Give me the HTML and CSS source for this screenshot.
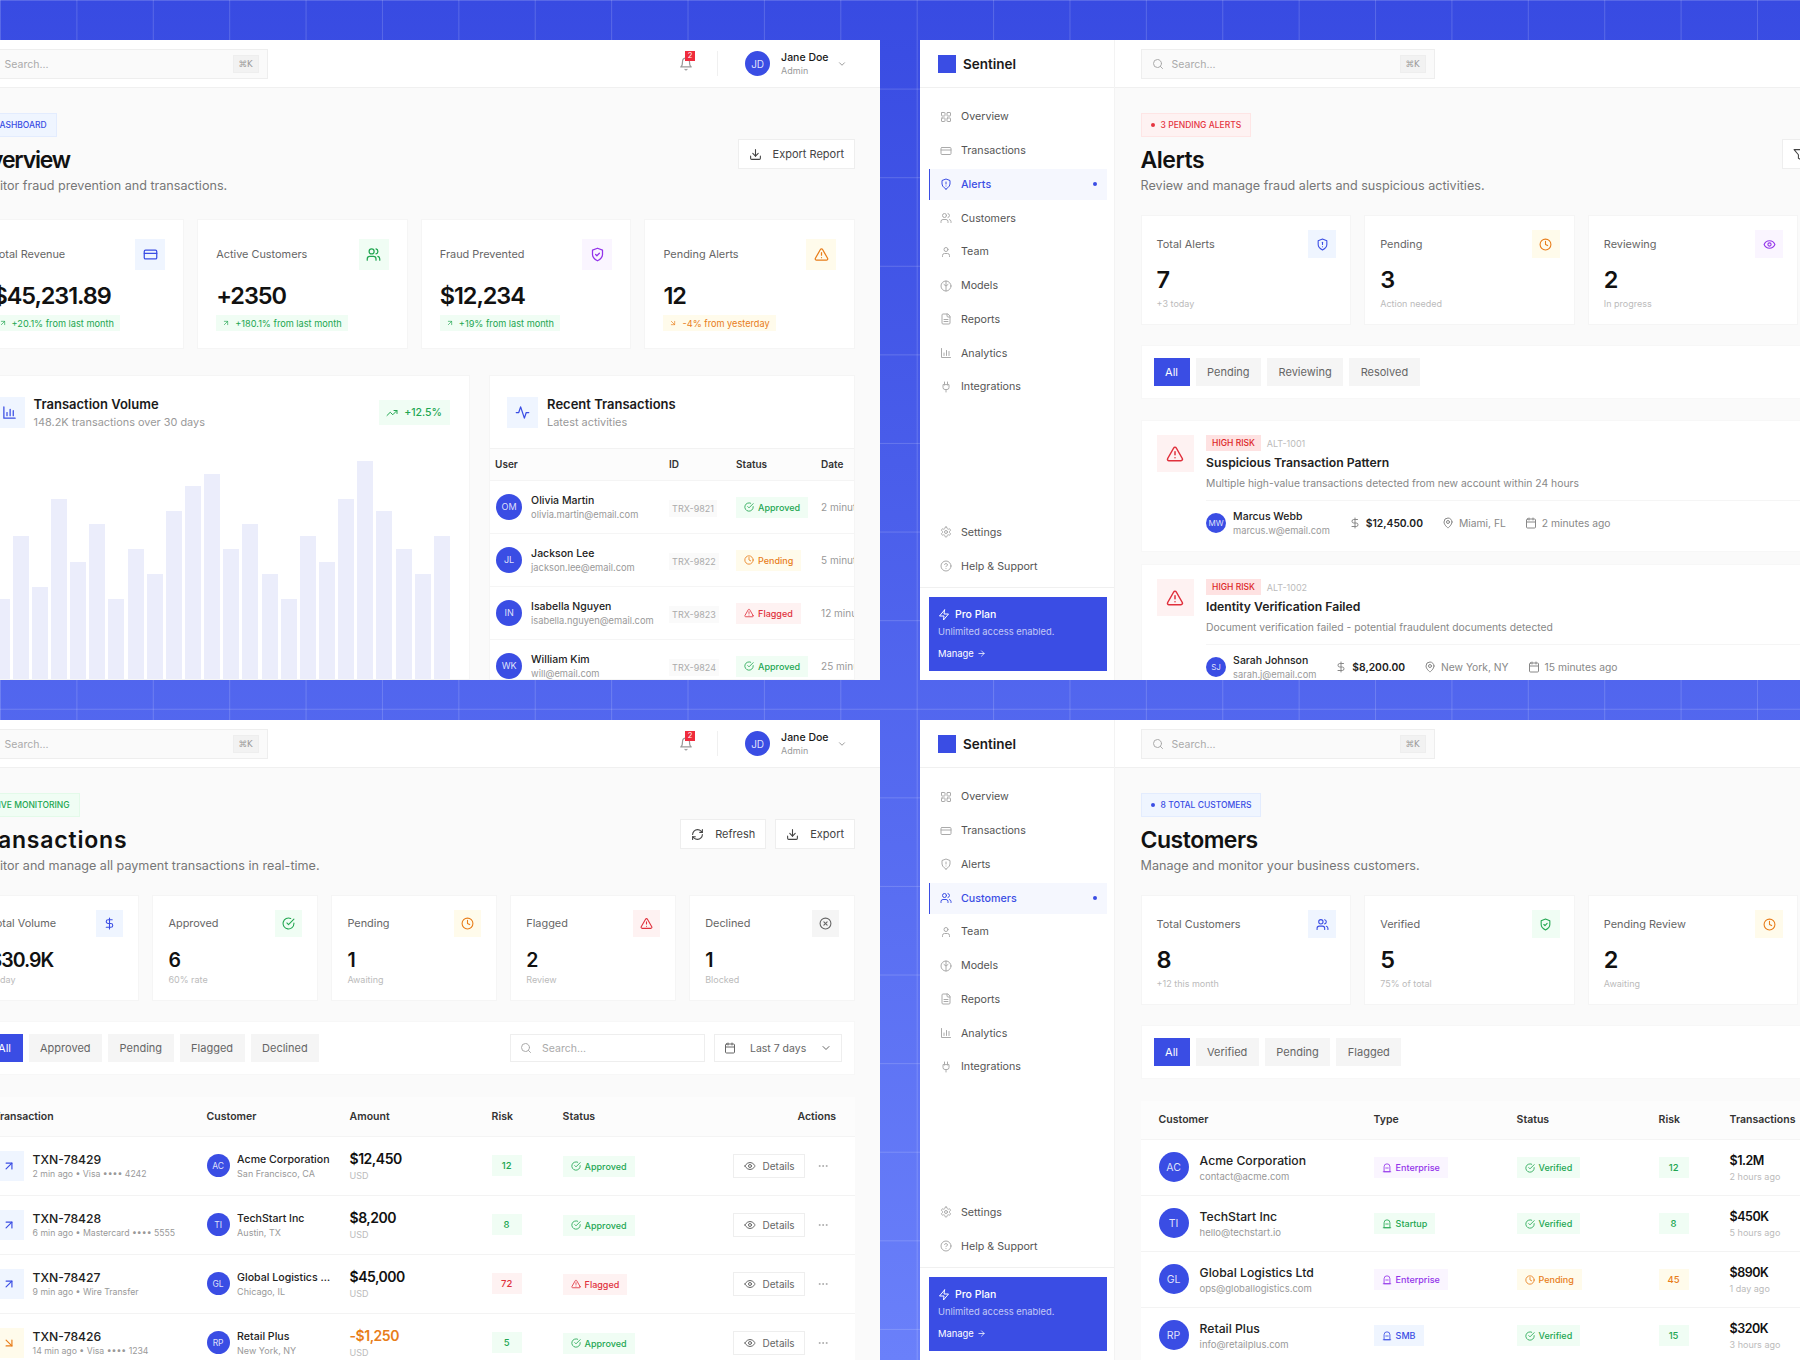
FILE: index.html
```html
<!DOCTYPE html>
<html lang="en">
<head>
    <meta charset="UTF-8">
    <title>Sentinel</title>
    <link rel="stylesheet" href="styles.css">
</head>
<body>
    <svg class="sprite">
        <symbol id="i-card" viewBox="0 0 24 24"><rect x="2" y="5" width="20" height="14" rx="2"/><path d="M2 10h20"/></symbol>
        <symbol id="i-users" viewBox="0 0 24 24"><path d="M16 21v-2a4 4 0 0 0-4-4H6a4 4 0 0 0-4 4v2"/><circle cx="9" cy="7" r="4"/><path d="M22 21v-2a4 4 0 0 0-3-3.87"/><path d="M16 3.13a4 4 0 0 1 0 7.75"/></symbol>
        <symbol id="i-user" viewBox="0 0 24 24"><path d="M19 21v-2a4 4 0 0 0-4-4H9a4 4 0 0 0-4 4v2"/><circle cx="12" cy="7" r="4"/></symbol>
        <symbol id="i-shield-check" viewBox="0 0 24 24"><path d="M12 22s8-4 8-10V5l-8-3-8 3v7c0 6 8 10 8 10z"/><path d="m9 12 2 2 4-4"/></symbol>
        <symbol id="i-shield-alert" viewBox="0 0 24 24"><path d="M12 22s8-4 8-10V5l-8-3-8 3v7c0 6 8 10 8 10z"/><path d="M12 8v4"/><path d="M12 16h.01"/></symbol>
        <symbol id="i-alert" viewBox="0 0 24 24"><path d="m21.73 18-8-14a2 2 0 0 0-3.48 0l-8 14A2 2 0 0 0 4 21h16a2 2 0 0 0 1.73-3Z"/><path d="M12 9v4"/><path d="M12 17h.01"/></symbol>
        <symbol id="i-bell" viewBox="0 0 24 24"><path d="M6 8a6 6 0 0 1 12 0c0 7 3 9 3 9H3s3-2 3-9"/><path d="M10.3 21a1.94 1.94 0 0 0 3.4 0"/></symbol>
        <symbol id="i-search" viewBox="0 0 24 24"><circle cx="11" cy="11" r="8"/><path d="m21 21-4.3-4.3"/></symbol>
        <symbol id="i-chevron" viewBox="0 0 24 24"><path d="m6 9 6 6 6-6"/></symbol>
        <symbol id="i-download" viewBox="0 0 24 24"><path d="M21 15v4a2 2 0 0 1-2 2H5a2 2 0 0 1-2-2v-4"/><path d="m7 10 5 5 5-5"/><path d="M12 15V3"/></symbol>
        <symbol id="i-up-right" viewBox="0 0 24 24"><path d="M7 7h10v10"/><path d="M7 17 17 7"/></symbol>
        <symbol id="i-down-right" viewBox="0 0 24 24"><path d="m7 7 10 10"/><path d="M17 7v10H7"/></symbol>
        <symbol id="i-chart" viewBox="0 0 24 24"><path d="M3 3v18h18"/><path d="M8 17v-5"/><path d="M13 17V7"/><path d="M18 17V9"/></symbol>
        <symbol id="i-activity" viewBox="0 0 24 24"><path d="M22 12h-4l-3 9L9 3l-3 9H2"/></symbol>
        <symbol id="i-trending" viewBox="0 0 24 24"><path d="m22 7-8.5 8.5-5-5L2 17"/><path d="M16 7h6v6"/></symbol>
        <symbol id="i-check" viewBox="0 0 24 24"><path d="M22 11.08V12a10 10 0 1 1-5.93-9.14"/><path d="m9 11 3 3L22 4"/></symbol>
        <symbol id="i-clock" viewBox="0 0 24 24"><circle cx="12" cy="12" r="10"/><path d="M12 6v6l4 2"/></symbol>
        <symbol id="i-dollar" viewBox="0 0 24 24"><path d="M12 2v20"/><path d="M17 5H9.5a3.5 3.5 0 0 0 0 7h5a3.5 3.5 0 0 1 0 7H6"/></symbol>
        <symbol id="i-x-circle" viewBox="0 0 24 24"><circle cx="12" cy="12" r="10"/><path d="m15 9-6 6"/><path d="m9 9 6 6"/></symbol>
        <symbol id="i-refresh" viewBox="0 0 24 24"><path d="M3 12a9 9 0 0 1 9-9 9.75 9.75 0 0 1 6.74 2.74L21 8"/><path d="M21 3v5h-5"/><path d="M21 12a9 9 0 0 1-9 9 9.75 9.75 0 0 1-6.74-2.74L3 16"/><path d="M8 16H3v5"/></symbol>
        <symbol id="i-eye" viewBox="0 0 24 24"><path d="M2 12s3-7 10-7 10 7 10 7-3 7-10 7-10-7-10-7Z"/><circle cx="12" cy="12" r="3"/></symbol>
        <symbol id="i-calendar" viewBox="0 0 24 24"><rect x="3" y="4" width="18" height="18" rx="2"/><path d="M16 2v4"/><path d="M8 2v4"/><path d="M3 10h18"/></symbol>
        <symbol id="i-grid" viewBox="0 0 24 24"><rect x="3" y="3" width="7" height="7" rx="1"/><rect x="14" y="3" width="7" height="7" rx="1"/><rect x="14" y="14" width="7" height="7" rx="1"/><rect x="3" y="14" width="7" height="7" rx="1"/></symbol>
        <symbol id="i-model" viewBox="0 0 24 24"><circle cx="12" cy="12" r="10"/><path d="M12 2v20"/><path d="M8 9l4 3 4-3"/></symbol>
        <symbol id="i-file" viewBox="0 0 24 24"><path d="M15 2H6a2 2 0 0 0-2 2v16a2 2 0 0 0 2 2h12a2 2 0 0 0 2-2V7Z"/><path d="M14 2v4a2 2 0 0 0 2 2h4"/><path d="M16 13H8"/><path d="M16 17H8"/></symbol>
        <symbol id="i-plug" viewBox="0 0 24 24"><path d="M12 22v-5"/><path d="M9 8V2"/><path d="M15 8V2"/><path d="M18 8v5a4 4 0 0 1-4 4h-4a4 4 0 0 1-4-4V8Z"/></symbol>
        <symbol id="i-gear" viewBox="0 0 24 24"><path d="M12.22 2h-.44a2 2 0 0 0-2 2v.18a2 2 0 0 1-1 1.73l-.43.25a2 2 0 0 1-2 0l-.15-.08a2 2 0 0 0-2.73.73l-.22.38a2 2 0 0 0 .73 2.73l.15.1a2 2 0 0 1 1 1.72v.51a2 2 0 0 1-1 1.74l-.15.09a2 2 0 0 0-.73 2.73l.22.38a2 2 0 0 0 2.73.73l.15-.08a2 2 0 0 1 2 0l.43.25a2 2 0 0 1 1 1.73V20a2 2 0 0 0 2 2h.44a2 2 0 0 0 2-2v-.18a2 2 0 0 1 1-1.73l.43-.25a2 2 0 0 1 2 0l.15.08a2 2 0 0 0 2.73-.73l.22-.39a2 2 0 0 0-.73-2.73l-.15-.08a2 2 0 0 1-1-1.74v-.5a2 2 0 0 1 1-1.74l.15-.09a2 2 0 0 0 .73-2.73l-.22-.38a2 2 0 0 0-2.73-.73l-.15.08a2 2 0 0 1-2 0l-.43-.25a2 2 0 0 1-1-1.73V4a2 2 0 0 0-2-2z"/><circle cx="12" cy="12" r="3"/></symbol>
        <symbol id="i-help" viewBox="0 0 24 24"><circle cx="12" cy="12" r="10"/><path d="M9.09 9a3 3 0 0 1 5.83 1c0 2-3 3-3 3"/><path d="M12 17h.01"/></symbol>
        <symbol id="i-zap" viewBox="0 0 24 24"><path d="M13 2 3 14h9l-1 8 10-12h-9l1-8z"/></symbol>
        <symbol id="i-arrow" viewBox="0 0 24 24"><path d="M5 12h14"/><path d="m12 5 7 7-7 7"/></symbol>
        <symbol id="i-pin" viewBox="0 0 24 24"><path d="M20 10c0 6-8 12-8 12s-8-6-8-12a8 8 0 0 1 16 0Z"/><circle cx="12" cy="10" r="3"/></symbol>
        <symbol id="i-filter" viewBox="0 0 24 24"><path d="M22 3H2l8 9.46V19l4 2v-8.54L22 3z"/></symbol>
        <symbol id="i-more" viewBox="0 0 24 24"><circle cx="5" cy="12" r="1"/><circle cx="12" cy="12" r="1"/><circle cx="19" cy="12" r="1"/></symbol>
        <symbol id="i-building" viewBox="0 0 24 24"><path d="M5 20V9a7 7 0 0 1 14 0v11Z"/><path d="M3 21h18"/><path d="M9 12h6"/></symbol>
    </svg>

    <!-- overview -->
    <section class="window">
        <div class="main main-left">
            <header class="topbar">
                <div class="search-box">
                    <svg class="ic"><use href="#i-search"/></svg>
                    <span class="search-text">Search...</span>
                    <kbd>⌘K</kbd>
                </div>
                <div class="user-area">
                    <div class="bell"><svg class="ic"><use href="#i-bell"/></svg><span class="bell-count">2</span></div>
                    <div class="user-menu">
                        <span class="avatar avatar-head">JD</span>
                        <div class="user-text"><strong>Jane Doe</strong><small>Admin</small></div>
                        <svg class="ic chevron"><use href="#i-chevron"/></svg>
                    </div>
                </div>
            </header>
            <div class="content">
                <div class="page-head">
                    <div>
                        <span class="tag tag-blue"><i class="dot"></i>DASHBOARD</span>
                        <h1 class="title-tight">Overview</h1>
                        <p>Monitor fraud prevention and transactions.</p>
                    </div>
                    <div class="page-actions">
                        <button class="btn"><svg class="ic"><use href="#i-download"/></svg>Export Report</button>
                    </div>
                </div>

                <div class="stats stats-4 stats-big">
                    <div class="stat">
                        <div class="stat-top"><span>Total Revenue</span><span class="stat-icon blue"><svg class="ic"><use href="#i-card"/></svg></span></div>
                        <div class="stat-value">$45,231.89</div>
                        <span class="delta green"><svg class="ic"><use href="#i-up-right"/></svg>+20.1% from last month</span>
                    </div>
                    <div class="stat">
                        <div class="stat-top"><span>Active Customers</span><span class="stat-icon green"><svg class="ic"><use href="#i-users"/></svg></span></div>
                        <div class="stat-value">+2350</div>
                        <span class="delta green"><svg class="ic"><use href="#i-up-right"/></svg>+180.1% from last month</span>
                    </div>
                    <div class="stat">
                        <div class="stat-top"><span>Fraud Prevented</span><span class="stat-icon purple"><svg class="ic"><use href="#i-shield-check"/></svg></span></div>
                        <div class="stat-value">$12,234</div>
                        <span class="delta green"><svg class="ic"><use href="#i-up-right"/></svg>+19% from last month</span>
                    </div>
                    <div class="stat">
                        <div class="stat-top"><span>Pending Alerts</span><span class="stat-icon amber"><svg class="ic"><use href="#i-alert"/></svg></span></div>
                        <div class="stat-value">12</div>
                        <span class="delta amber"><svg class="ic"><use href="#i-down-right"/></svg>-4% from yesterday</span>
                    </div>
                </div>

                <div class="overview-grid">
                    <div class="panel">
                        <div class="panel-head">
                            <span class="panel-icon blue"><svg class="ic"><use href="#i-chart"/></svg></span>
                            <div class="panel-title"><h3>Transaction Volume</h3><small>148.2K transactions over 30 days</small></div>
                            <span class="trend"><svg class="ic"><use href="#i-trending"/></svg>+12.5%</span>
                        </div>
                        <div class="bars">
                            <i style="height:81px"></i><i style="height:144px"></i><i style="height:93px"></i><i style="height:181px"></i>
                            <i style="height:118px"></i><i style="height:156px"></i><i style="height:81px"></i><i style="height:131px"></i>
                            <i style="height:106px"></i><i style="height:169px"></i><i style="height:194px"></i><i style="height:206px"></i>
                            <i style="height:131px"></i><i style="height:156px"></i><i style="height:106px"></i><i style="height:81px"></i>
                            <i style="height:144px"></i><i style="height:118px"></i><i style="height:181px"></i><i style="height:219px"></i>
                            <i style="height:169px"></i><i style="height:131px"></i><i style="height:106px"></i><i style="height:144px"></i>
                        </div>
                    </div>
                    <div class="panel">
                        <div class="panel-head panel-head-line">
                            <span class="panel-icon blue"><svg class="ic"><use href="#i-activity"/></svg></span>
                            <div class="panel-title"><h3>Recent Transactions</h3><small>Latest activities</small></div>
                        </div>
                        <table class="mini-table">
                            <thead><tr><th>User</th><th>ID</th><th>Status</th><th>Date</th></tr></thead>
                            <tbody>
                                <tr>
                                    <td><div class="person"><span class="avatar">OM</span><div><b>Olivia Martin</b><small>olivia.martin@email.com</small></div></div></td>
                                    <td><span class="trx-id">TRX-9821</span></td>
                                    <td><span class="pill green"><svg class="ic"><use href="#i-check"/></svg>Approved</span></td>
                                    <td class="muted">2 minutes ago</td>
                                </tr>
                                <tr>
                                    <td><div class="person"><span class="avatar">JL</span><div><b>Jackson Lee</b><small>jackson.lee@email.com</small></div></div></td>
                                    <td><span class="trx-id">TRX-9822</span></td>
                                    <td><span class="pill amber"><svg class="ic"><use href="#i-clock"/></svg>Pending</span></td>
                                    <td class="muted">5 minutes ago</td>
                                </tr>
                                <tr>
                                    <td><div class="person"><span class="avatar">IN</span><div><b>Isabella Nguyen</b><small>isabella.nguyen@email.com</small></div></div></td>
                                    <td><span class="trx-id">TRX-9823</span></td>
                                    <td><span class="pill red"><svg class="ic"><use href="#i-alert"/></svg>Flagged</span></td>
                                    <td class="muted">12 minutes ago</td>
                                </tr>
                                <tr>
                                    <td><div class="person"><span class="avatar">WK</span><div><b>William Kim</b><small>will@email.com</small></div></div></td>
                                    <td><span class="trx-id">TRX-9824</span></td>
                                    <td><span class="pill green"><svg class="ic"><use href="#i-check"/></svg>Approved</span></td>
                                    <td class="muted">25 minutes ago</td>
                                </tr>
                            </tbody>
                        </table>
                    </div>
                </div>
            </div>
        </div>
    </section>

    <!-- alerts -->
    <section class="window">
        <aside class="sidebar">
            <div class="brand"><span class="brand-mark"></span>Sentinel</div>
            <nav class="nav">
                <a><svg class="ic"><use href="#i-grid"/></svg>Overview</a>
                <a><svg class="ic"><use href="#i-card"/></svg>Transactions</a>
                <a class="active"><svg class="ic"><use href="#i-shield-alert"/></svg>Alerts</a>
                <a><svg class="ic"><use href="#i-users"/></svg>Customers</a>
                <a><svg class="ic"><use href="#i-user"/></svg>Team</a>
                <a><svg class="ic"><use href="#i-model"/></svg>Models</a>
                <a><svg class="ic"><use href="#i-file"/></svg>Reports</a>
                <a><svg class="ic"><use href="#i-chart"/></svg>Analytics</a>
                <a><svg class="ic"><use href="#i-plug"/></svg>Integrations</a>
            </nav>
            <nav class="nav nav-bottom">
                <a><svg class="ic"><use href="#i-gear"/></svg>Settings</a>
                <a><svg class="ic"><use href="#i-help"/></svg>Help &amp; Support</a>
            </nav>
            <div class="plan-wrap">
                <div class="plan">
                    <div class="plan-name"><svg class="ic"><use href="#i-zap"/></svg>Pro Plan</div>
                    <p>Unlimited access enabled.</p>
                    <a>Manage <svg class="ic"><use href="#i-arrow"/></svg></a>
                </div>
            </div>
        </aside>
        <div class="main">
            <header class="topbar">
                <div class="search-box">
                    <svg class="ic"><use href="#i-search"/></svg>
                    <span class="search-text">Search...</span>
                    <kbd>⌘K</kbd>
                </div>
            </header>
            <div class="content">
                <div class="page-head">
                    <div>
                        <span class="tag tag-red"><i class="dot"></i>3 PENDING ALERTS</span>
                        <h1>Alerts</h1>
                        <p>Review and manage fraud alerts and suspicious activities.</p>
                    </div>
                    <div class="page-actions">
                        <button class="btn btn-filter"><svg class="ic"><use href="#i-filter"/></svg>Filter Alerts</button>
                        <button class="btn"><svg class="ic"><use href="#i-download"/></svg>Export Report</button>
                    </div>
                </div>

                <div class="stats stats-4 stats-mid">
                    <div class="stat">
                        <div class="stat-top"><span>Total Alerts</span><span class="stat-icon blue"><svg class="ic"><use href="#i-shield-alert"/></svg></span></div>
                        <div class="stat-value">7</div>
                        <small class="stat-note">+3 today</small>
                    </div>
                    <div class="stat">
                        <div class="stat-top"><span>Pending</span><span class="stat-icon amber"><svg class="ic"><use href="#i-clock"/></svg></span></div>
                        <div class="stat-value">3</div>
                        <small class="stat-note">Action needed</small>
                    </div>
                    <div class="stat">
                        <div class="stat-top"><span>Reviewing</span><span class="stat-icon purple"><svg class="ic"><use href="#i-eye"/></svg></span></div>
                        <div class="stat-value">2</div>
                        <small class="stat-note">In progress</small>
                    </div>
                    <div class="stat">
                        <div class="stat-top"><span>Resolved</span><span class="stat-icon green"><svg class="ic"><use href="#i-check"/></svg></span></div>
                        <div class="stat-value">2</div>
                        <small class="stat-note">This week</small>
                    </div>
                </div>

                <div class="filter-bar">
                    <div class="tabs">
                        <button class="tab active">All</button>
                        <button class="tab">Pending</button>
                        <button class="tab">Reviewing</button>
                        <button class="tab">Resolved</button>
                    </div>
                    <div class="select select-types">All Types<svg class="ic"><use href="#i-chevron"/></svg></div>
                </div>

                <article class="alert-card">
                    <span class="alert-icon"><svg class="ic"><use href="#i-alert"/></svg></span>
                    <div class="alert-body">
                        <div class="alert-meta"><span class="risk-tag">HIGH RISK</span><span>ALT-1001</span></div>
                        <h3>Suspicious Transaction Pattern</h3>
                        <p>Multiple high-value transactions detected from new account within 24 hours</p>
                        <div class="alert-foot">
                            <div class="person"><span class="avatar avatar-sm">MW</span><div><b>Marcus Webb</b><small>marcus.w@email.com</small></div></div>
                            <span class="fact"><svg class="ic"><use href="#i-dollar"/></svg><b>$12,450.00</b></span>
                            <span class="fact"><svg class="ic"><use href="#i-pin"/></svg>Miami, FL</span>
                            <span class="fact"><svg class="ic"><use href="#i-calendar"/></svg>2 minutes ago</span>
                        </div>
                    </div>
                </article>
                <article class="alert-card">
                    <span class="alert-icon"><svg class="ic"><use href="#i-alert"/></svg></span>
                    <div class="alert-body">
                        <div class="alert-meta"><span class="risk-tag">HIGH RISK</span><span>ALT-1002</span></div>
                        <h3>Identity Verification Failed</h3>
                        <p>Document verification failed - potential fraudulent documents detected</p>
                        <div class="alert-foot">
                            <div class="person"><span class="avatar avatar-sm">SJ</span><div><b>Sarah Johnson</b><small>sarah.j@email.com</small></div></div>
                            <span class="fact"><svg class="ic"><use href="#i-dollar"/></svg><b>$8,200.00</b></span>
                            <span class="fact"><svg class="ic"><use href="#i-pin"/></svg>New York, NY</span>
                            <span class="fact"><svg class="ic"><use href="#i-calendar"/></svg>15 minutes ago</span>
                        </div>
                    </div>
                </article>
            </div>
        </div>
    </section>

    <!-- transactions -->
    <section class="window">
        <div class="main main-left">
            <header class="topbar">
                <div class="search-box">
                    <svg class="ic"><use href="#i-search"/></svg>
                    <span class="search-text">Search...</span>
                    <kbd>⌘K</kbd>
                </div>
                <div class="user-area">
                    <div class="bell"><svg class="ic"><use href="#i-bell"/></svg><span class="bell-count">2</span></div>
                    <div class="user-menu">
                        <span class="avatar avatar-head">JD</span>
                        <div class="user-text"><strong>Jane Doe</strong><small>Admin</small></div>
                        <svg class="ic chevron"><use href="#i-chevron"/></svg>
                    </div>
                </div>
            </header>
            <div class="content">
                <div class="page-head">
                    <div>
                        <span class="tag tag-green"><i class="dot"></i>LIVE MONITORING</span>
                        <h1 class="title-wide">Transactions</h1>
                        <p>Monitor and manage all payment transactions in real-time.</p>
                    </div>
                    <div class="page-actions">
                        <button class="btn"><svg class="ic"><use href="#i-refresh"/></svg>Refresh</button>
                        <button class="btn"><svg class="ic"><use href="#i-download"/></svg>Export</button>
                    </div>
                </div>

                <div class="stats stats-5 stats-small">
                    <div class="stat">
                        <div class="stat-top"><span>Total Volume</span><span class="stat-icon blue"><svg class="ic"><use href="#i-dollar"/></svg></span></div>
                        <div class="stat-value">$30.9K</div>
                        <small class="stat-note">Today</small>
                    </div>
                    <div class="stat">
                        <div class="stat-top"><span>Approved</span><span class="stat-icon green"><svg class="ic"><use href="#i-check"/></svg></span></div>
                        <div class="stat-value">6</div>
                        <small class="stat-note">60% rate</small>
                    </div>
                    <div class="stat">
                        <div class="stat-top"><span>Pending</span><span class="stat-icon amber"><svg class="ic"><use href="#i-clock"/></svg></span></div>
                        <div class="stat-value">1</div>
                        <small class="stat-note">Awaiting</small>
                    </div>
                    <div class="stat">
                        <div class="stat-top"><span>Flagged</span><span class="stat-icon red"><svg class="ic"><use href="#i-alert"/></svg></span></div>
                        <div class="stat-value">2</div>
                        <small class="stat-note">Review</small>
                    </div>
                    <div class="stat">
                        <div class="stat-top"><span>Declined</span><span class="stat-icon grey"><svg class="ic"><use href="#i-x-circle"/></svg></span></div>
                        <div class="stat-value">1</div>
                        <small class="stat-note">Blocked</small>
                    </div>
                </div>

                <div class="filter-bar">
                    <div class="tabs">
                        <button class="tab active">All</button>
                        <button class="tab">Approved</button>
                        <button class="tab">Pending</button>
                        <button class="tab">Flagged</button>
                        <button class="tab">Declined</button>
                    </div>
                    <div class="filter-right">
                        <div class="select select-search"><svg class="ic"><use href="#i-search"/></svg><span>Search...</span></div>
                        <div class="select select-date"><svg class="ic"><use href="#i-calendar"/></svg>Last 7 days<svg class="ic"><use href="#i-chevron"/></svg></div>
                    </div>
                </div>

                <table class="data-table txn-table">
                    <thead><tr><th>Transaction</th><th>Customer</th><th>Amount</th><th>Risk</th><th>Status</th><th class="right">Actions</th></tr></thead>
                    <tbody>
                        <tr>
                            <td><div class="person"><span class="dir-icon blue"><svg class="ic"><use href="#i-up-right"/></svg></span><div><b>TXN-78429</b><small>2 min ago • Visa •••• 4242</small></div></div></td>
                            <td><div class="person"><span class="avatar avatar-md">AC</span><div class="person-clip"><b>Acme Corporation</b><small>San Francisco, CA</small></div></div></td>
                            <td><div class="money">$12,450<small>USD</small></div></td>
                            <td><span class="risk green">12</span></td>
                            <td><span class="pill green"><svg class="ic"><use href="#i-check"/></svg>Approved</span></td>
                            <td><div class="row-actions"><button class="btn-mini"><svg class="ic"><use href="#i-eye"/></svg>Details</button><span class="dots"><svg class="ic"><use href="#i-more"/></svg></span></div></td>
                        </tr>
                        <tr>
                            <td><div class="person"><span class="dir-icon blue"><svg class="ic"><use href="#i-up-right"/></svg></span><div><b>TXN-78428</b><small>6 min ago • Mastercard •••• 5555</small></div></div></td>
                            <td><div class="person"><span class="avatar avatar-md">TI</span><div class="person-clip"><b>TechStart Inc</b><small>Austin, TX</small></div></div></td>
                            <td><div class="money">$8,200<small>USD</small></div></td>
                            <td><span class="risk green">8</span></td>
                            <td><span class="pill green"><svg class="ic"><use href="#i-check"/></svg>Approved</span></td>
                            <td><div class="row-actions"><button class="btn-mini"><svg class="ic"><use href="#i-eye"/></svg>Details</button><span class="dots"><svg class="ic"><use href="#i-more"/></svg></span></div></td>
                        </tr>
                        <tr>
                            <td><div class="person"><span class="dir-icon blue"><svg class="ic"><use href="#i-up-right"/></svg></span><div><b>TXN-78427</b><small>9 min ago • Wire Transfer</small></div></div></td>
                            <td><div class="person"><span class="avatar avatar-md">GL</span><div class="person-clip"><b>Global Logistics Ltd</b><small>Chicago, IL</small></div></div></td>
                            <td><div class="money">$45,000<small>USD</small></div></td>
                            <td><span class="risk red">72</span></td>
                            <td><span class="pill red"><svg class="ic"><use href="#i-alert"/></svg>Flagged</span></td>
                            <td><div class="row-actions"><button class="btn-mini"><svg class="ic"><use href="#i-eye"/></svg>Details</button><span class="dots"><svg class="ic"><use href="#i-more"/></svg></span></div></td>
                        </tr>
                        <tr>
                            <td><div class="person"><span class="dir-icon amber"><svg class="ic"><use href="#i-down-right"/></svg></span><div><b>TXN-78426</b><small>14 min ago • Visa •••• 1234</small></div></div></td>
                            <td><div class="person"><span class="avatar avatar-md">RP</span><div class="person-clip"><b>Retail Plus</b><small>New York, NY</small></div></div></td>
                            <td><div class="money money-out">-$1,250<small>USD</small></div></td>
                            <td><span class="risk green">5</span></td>
                            <td><span class="pill green"><svg class="ic"><use href="#i-check"/></svg>Approved</span></td>
                            <td><div class="row-actions"><button class="btn-mini"><svg class="ic"><use href="#i-eye"/></svg>Details</button><span class="dots"><svg class="ic"><use href="#i-more"/></svg></span></div></td>
                        </tr>
                    </tbody>
                </table>
            </div>
        </div>
    </section>

    <!-- customers -->
    <section class="window">
        <aside class="sidebar">
            <div class="brand"><span class="brand-mark"></span>Sentinel</div>
            <nav class="nav">
                <a><svg class="ic"><use href="#i-grid"/></svg>Overview</a>
                <a><svg class="ic"><use href="#i-card"/></svg>Transactions</a>
                <a><svg class="ic"><use href="#i-shield-alert"/></svg>Alerts</a>
                <a class="active"><svg class="ic"><use href="#i-users"/></svg>Customers</a>
                <a><svg class="ic"><use href="#i-user"/></svg>Team</a>
                <a><svg class="ic"><use href="#i-model"/></svg>Models</a>
                <a><svg class="ic"><use href="#i-file"/></svg>Reports</a>
                <a><svg class="ic"><use href="#i-chart"/></svg>Analytics</a>
                <a><svg class="ic"><use href="#i-plug"/></svg>Integrations</a>
            </nav>
            <nav class="nav nav-bottom">
                <a><svg class="ic"><use href="#i-gear"/></svg>Settings</a>
                <a><svg class="ic"><use href="#i-help"/></svg>Help &amp; Support</a>
            </nav>
            <div class="plan-wrap">
                <div class="plan">
                    <div class="plan-name"><svg class="ic"><use href="#i-zap"/></svg>Pro Plan</div>
                    <p>Unlimited access enabled.</p>
                    <a>Manage <svg class="ic"><use href="#i-arrow"/></svg></a>
                </div>
            </div>
        </aside>
        <div class="main">
            <header class="topbar">
                <div class="search-box">
                    <svg class="ic"><use href="#i-search"/></svg>
                    <span class="search-text">Search...</span>
                    <kbd>⌘K</kbd>
                </div>
            </header>
            <div class="content">
                <div class="page-head">
                    <div>
                        <span class="tag tag-blue"><i class="dot"></i>8 TOTAL CUSTOMERS</span>
                        <h1>Customers</h1>
                        <p>Manage and monitor your business customers.</p>
                    </div>
                </div>

                <div class="stats stats-4 stats-mid">
                    <div class="stat">
                        <div class="stat-top"><span>Total Customers</span><span class="stat-icon blue"><svg class="ic"><use href="#i-users"/></svg></span></div>
                        <div class="stat-value">8</div>
                        <small class="stat-note">+12 this month</small>
                    </div>
                    <div class="stat">
                        <div class="stat-top"><span>Verified</span><span class="stat-icon green"><svg class="ic"><use href="#i-shield-check"/></svg></span></div>
                        <div class="stat-value">5</div>
                        <small class="stat-note">75% of total</small>
                    </div>
                    <div class="stat">
                        <div class="stat-top"><span>Pending Review</span><span class="stat-icon amber"><svg class="ic"><use href="#i-clock"/></svg></span></div>
                        <div class="stat-value">2</div>
                        <small class="stat-note">Awaiting</small>
                    </div>
                    <div class="stat">
                        <div class="stat-top"><span>Flagged</span><span class="stat-icon red"><svg class="ic"><use href="#i-alert"/></svg></span></div>
                        <div class="stat-value">1</div>
                        <small class="stat-note">Needs review</small>
                    </div>
                </div>

                <div class="filter-bar">
                    <div class="tabs">
                        <button class="tab active">All</button>
                        <button class="tab">Verified</button>
                        <button class="tab">Pending</button>
                        <button class="tab">Flagged</button>
                    </div>
                    <div class="select select-types">All Types<svg class="ic"><use href="#i-chevron"/></svg></div>
                </div>

                <table class="data-table cust-table">
                    <thead><tr><th>Customer</th><th>Type</th><th>Status</th><th>Risk</th><th>Transactions</th><th></th></tr></thead>
                    <tbody>
                        <tr>
                            <td><div class="person"><span class="avatar avatar-lg">AC</span><div><b>Acme Corporation</b><small>contact@acme.com</small></div></div></td>
                            <td><span class="pill purple"><svg class="ic"><use href="#i-building"/></svg>Enterprise</span></td>
                            <td><span class="pill green"><svg class="ic"><use href="#i-check"/></svg>Verified</span></td>
                            <td><span class="risk green">12</span></td>
                            <td><div class="money money-sm">$1.2M<small>2 hours ago</small></div></td>
                            <td></td>
                        </tr>
                        <tr>
                            <td><div class="person"><span class="avatar avatar-lg">TI</span><div><b>TechStart Inc</b><small>hello@techstart.io</small></div></div></td>
                            <td><span class="pill green"><svg class="ic"><use href="#i-building"/></svg>Startup</span></td>
                            <td><span class="pill green"><svg class="ic"><use href="#i-check"/></svg>Verified</span></td>
                            <td><span class="risk green">8</span></td>
                            <td><div class="money money-sm">$450K<small>5 hours ago</small></div></td>
                            <td></td>
                        </tr>
                        <tr>
                            <td><div class="person"><span class="avatar avatar-lg">GL</span><div><b>Global Logistics Ltd</b><small>ops@globallogistics.com</small></div></div></td>
                            <td><span class="pill purple"><svg class="ic"><use href="#i-building"/></svg>Enterprise</span></td>
                            <td><span class="pill amber"><svg class="ic"><use href="#i-clock"/></svg>Pending</span></td>
                            <td><span class="risk amber">45</span></td>
                            <td><div class="money money-sm">$890K<small>1 day ago</small></div></td>
                            <td></td>
                        </tr>
                        <tr>
                            <td><div class="person"><span class="avatar avatar-lg">RP</span><div><b>Retail Plus</b><small>info@retailplus.com</small></div></div></td>
                            <td><span class="pill blue"><svg class="ic"><use href="#i-building"/></svg>SMB</span></td>
                            <td><span class="pill green"><svg class="ic"><use href="#i-check"/></svg>Verified</span></td>
                            <td><span class="risk green">15</span></td>
                            <td><div class="money money-sm">$320K<small>3 hours ago</small></div></td>
                            <td></td>
                        </tr>
                    </tbody>
                </table>
            </div>
        </div>
    </section>
</body>
</html>
```

FILE: styles.css
```css
* {
    box-sizing: border-box;
}

body {
    margin: 0;
    width: 1800px;
    height: 1360px;
    overflow: hidden;
    padding-top: 40px;
    display: grid;
    grid-template-columns: 880px 880px;
    grid-template-rows: 640px 640px;
    column-gap: 40px;
    row-gap: 40px;
    font-family: Inter, "Liberation Sans", sans-serif;
    color: #1a1a1a;
    background-image:
        linear-gradient(rgba(255, 255, 255, 0.16) 1px, transparent 1px),
        linear-gradient(90deg, rgba(255, 255, 255, 0.16) 1px, transparent 1px),
        linear-gradient(#384be2, #6a80fa);
    background-size: 76.4px 88.6px, 76.4px 88.6px, 100% 100%;
}

.sprite {
    display: none;
}

.ic {
    width: 12px;
    height: 12px;
    flex: none;
    fill: none;
    stroke: currentColor;
    stroke-width: 2;
    stroke-linecap: round;
    stroke-linejoin: round;
}

.window {
    display: flex;
    overflow: hidden;
    background: #fafafa;
}

.main {
    width: 932.7px;
    flex: none;
    background: #fafafa;
}

.main-left {
    margin-left: -52px;
}

/* sidebar */
.sidebar {
    width: 195px;
    flex: none;
    display: flex;
    flex-direction: column;
    background: #fff;
    border-right: 1px solid #f3f3f3;
}

.brand {
    height: 48px;
    padding-left: 18px;
    display: flex;
    align-items: center;
    gap: 7px;
    font-size: 13.5px;
    font-weight: 600;
    border-bottom: 1px solid #f0f0f0;
}

.brand-mark {
    width: 18px;
    height: 18px;
    background: #3a4de4;
}

.nav {
    padding: 12px 7px 0 9px;
}

.nav a {
    height: 33.75px;
    padding-left: 11px;
    display: flex;
    align-items: center;
    gap: 9px;
    font-size: 10.7px;
    color: #555;
    position: relative;
}

.nav .ic {
    color: #aaa;
}

.nav a.active {
    height: 31px;
    margin: 1.4px 0;
    padding-left: 10px;
    color: #3a4de4;
    font-weight: 500;
    background: #f5f7fe;
    border-left: 1.5px solid #3a4de4;
}

.nav a.active .ic {
    color: #3a4de4;
}

.nav a.active::after {
    content: "";
    position: absolute;
    right: 10px;
    top: 13px;
    width: 4px;
    height: 4px;
    border-radius: 50%;
    background: #3a4de4;
}

.nav-bottom {
    margin-top: auto;
    padding-top: 0;
    padding-bottom: 4px;
}

.plan-wrap {
    padding: 9px 7px 9px 9px;
    border-top: 1px solid #f0f0f0;
}

.plan {
    height: 74px;
    padding: 11px 9px 0;
    background: #3a4de4;
    color: #fff;
}

.plan-name {
    display: flex;
    align-items: center;
    gap: 5px;
    font-size: 10.5px;
    font-weight: 500;
}

.plan p {
    margin: 5px 0 11px;
    font-size: 9.4px;
    color: rgba(255, 255, 255, 0.7);
}

.plan a {
    display: flex;
    align-items: center;
    gap: 3px;
    font-size: 9.4px;
}

.plan a .ic {
    width: 9px;
    height: 9px;
}

/* top bar */
.topbar {
    height: 48px;
    padding: 0 25.6px;
    display: flex;
    align-items: center;
    justify-content: space-between;
    background: #fff;
    border-bottom: 1px solid #f0f0f0;
}

.search-box {
    width: 294px;
    height: 30px;
    padding: 0 8px 0 10px;
    display: flex;
    align-items: center;
    gap: 8px;
    background: #fafafa;
    border: 1px solid #eee;
    color: #aaa;
}

.search-text {
    flex: 1;
    font-size: 10.5px;
    padding-top: 1px;
}

kbd {
    width: 26px;
    height: 18px;
    display: flex;
    align-items: center;
    justify-content: center;
    background: #f2f2f2;
    border: 1px solid #eee;
    font-family: "DejaVu Sans", sans-serif;
    font-size: 8.5px;
    color: #999;
}

.user-area {
    margin-right: 8px;
    display: flex;
    align-items: center;
}

.bell {
    position: relative;
    width: 14px;
    margin-right: 24px;
    display: flex;
    color: #999;
}

.bell .ic {
    width: 14px;
    height: 14px;
}

.bell-count {
    position: absolute;
    left: 6px;
    top: -6px;
    width: 10px;
    height: 10px;
    background: #ef2b3c;
    color: #fff;
    font-size: 7.5px;
    line-height: 10px;
    text-align: center;
}

.user-menu {
    padding-left: 27px;
    display: flex;
    align-items: center;
    border-left: 1px solid #f0f0f0;
}

.avatar {
    width: 26px;
    height: 26px;
    flex: none;
    display: flex;
    align-items: center;
    justify-content: center;
    border-radius: 50%;
    background: #3a4de4;
    color: rgba(255, 255, 255, 0.85);
    font-size: 9px;
}

.avatar-head {
    width: 25px;
    height: 25px;
    font-size: 10px;
}

.avatar-sm {
    width: 20px;
    height: 20px;
    font-size: 8px;
}

.avatar-md {
    width: 23px;
    height: 23px;
    font-size: 8.5px;
}

.avatar-lg {
    width: 30px;
    height: 30px;
    font-size: 10.5px;
}

.user-text {
    margin-left: 11px;
    width: 56px;
}

.user-text strong {
    display: block;
    font-size: 10.5px;
    font-weight: 500;
}

.user-text small {
    display: block;
    margin-top: 1px;
    font-size: 9px;
    color: #999;
}

.chevron {
    width: 10px;
    height: 10px;
    color: #888;
}

/* page */
.content {
    padding: 25px 25.6px;
}

.page-head {
    display: flex;
    align-items: center;
    justify-content: space-between;
    margin-bottom: 20px;
}

.tag {
    height: 24px;
    padding: 0 9px;
    display: inline-flex;
    align-items: center;
    gap: 6px;
    font-size: 8.5px;
    font-weight: 500;
    border: 1px solid;
    vertical-align: top;
}

.tag .dot {
    width: 4px;
    height: 4px;
    border-radius: 50%;
    background: currentColor;
}

.tag-blue {
    color: #3a4de4;
    background: #eff5ff;
    border-color: #e3ecfe;
}

.tag-red {
    color: #e5343f;
    background: #fef2f2;
    border-color: #fee5e5;
}

.tag-green {
    color: #22a651;
    background: #f0fdf4;
    border-color: #e3fae9;
}

h1 {
    margin: 7px 0 1px;
    font-size: 23px;
    line-height: 32px;
    font-weight: 600;
    letter-spacing: -0.5px;
    color: #111;
}

h1.title-wide {
    letter-spacing: 0.8px;
}

h1.title-tight {
    letter-spacing: -1.2px;
}

.page-head p {
    margin: 0;
    font-size: 12.6px;
    line-height: 18px;
    color: #777;
}

.page-actions {
    display: flex;
    gap: 9px;
}

.btn {
    height: 30px;
    padding: 0 10px;
    display: flex;
    align-items: center;
    gap: 11px;
    background: #fff;
    border: 1px solid #eee;
    font: inherit;
    font-size: 11px;
    color: #444;
}

.btn-filter {
    min-width: 114px;
}

.btn .ic {
    width: 13px;
    height: 13px;
}

/* stat cards */
.stats {
    display: grid;
    width: 881.5px;
    gap: 13px;
    margin-bottom: 20px;
}

.stats-4 {
    grid-template-columns: repeat(4, 1fr);
}

.stats-5 {
    grid-template-columns: repeat(5, 1fr);
}

.stat {
    background: #fff;
    border: 1px solid #f5f5f5;
    padding: 14px 14px 14px 15px;
}

.stat-top {
    display: flex;
    align-items: center;
    justify-content: space-between;
    font-size: 10.9px;
    color: #666;
}

.stat-top > span:first-child {
    position: relative;
    top: -0.5px;
}

.stat-icon {
    width: 28px;
    height: 28px;
    display: flex;
    align-items: center;
    justify-content: center;
}

.stat-icon .ic {
    width: 13px;
    height: 13px;
}

.stat-value {
    margin-top: 9px;
    font-size: 23.5px;
    line-height: 26px;
    font-weight: 600;
    letter-spacing: -1.1px;
    color: #111;
}

.stat-note {
    display: block;
    margin-top: 4px;
    font-size: 9px;
    line-height: 13px;
    color: #bbb;
}

.stats-big {
    margin-top: 24px;
    margin-bottom: 26px;
}

.stats-big .stat {
    height: 130px;
    padding: 19px 18px 18px;
}

.stats-big .stat-icon {
    width: 30px;
    height: 31px;
}

.stats-big .stat-icon .ic {
    width: 15px;
    height: 15px;
}

.stats-big .stat-value {
    margin-top: 11px;
    line-height: 30px;
}

.stats-small .stat {
    padding: 14px 15px;
    height: 106px;
}

.stats-small .stat-icon {
    width: 27px;
    height: 27px;
}

.stats-small .stat-value {
    margin-top: 11px;
    font-size: 19.5px;
    line-height: 24px;
    letter-spacing: -1px;
}

.stats-small .stat-note {
    margin-top: 2px;
    line-height: 12px;
}

.delta {
    width: fit-content;
    height: 16px;
    margin-top: 4px;
    padding: 0 6px;
    display: flex;
    align-items: center;
    gap: 5px;
    font-size: 9.2px;
}

.delta .ic {
    width: 8px;
    height: 8px;
}

.blue { background: #eff5ff; color: #3a4de4; }
.green { background: #f0fdf4; color: #22a651; }
.purple { background: #faf5ff; color: #9333ea; }
.amber { background: #fffbeb; color: #e87d1a; }
.red { background: #fef2f2; color: #e0303c; }
.grey { background: #f5f5f5; color: #666; }

/* overview panels */
.overview-grid {
    display: grid;
    grid-template-columns: 496px 366px;
    gap: 19.5px;
    width: 881.5px;
}

.panel {
    background: #fff;
    border: 1px solid #f5f5f5;
    overflow: hidden;
    height: 305px;
}

.panel-head {
    height: 73px;
    padding: 0 19px;
    display: flex;
    align-items: center;
    gap: 9px;
}

.panel-head-line {
    padding-left: 17px;
    border-bottom: 1px solid #f2f2f2;
}

.panel-icon {
    width: 31px;
    height: 31px;
    display: flex;
    align-items: center;
    justify-content: center;
}

.panel-icon .ic {
    width: 15px;
    height: 15px;
}

.panel-title {
    flex: 1;
}

.panel-title h3 {
    margin: 0;
    font-size: 13px;
    font-weight: 600;
    color: #1a1a1a;
}

.panel-title small {
    display: block;
    margin-top: 3px;
    font-size: 10.9px;
    color: #999;
}

.trend {
    height: 25px;
    width: 71px;
    display: flex;
    align-items: center;
    justify-content: center;
    gap: 6px;
    background: #f0fdf4;
    color: #22a651;
    font-size: 10.5px;
    font-weight: 500;
}

.bars {
    height: 219px;
    margin: 12px 19px 0;
    display: flex;
    align-items: flex-end;
    gap: 3.2px;
}

.bars i {
    flex: 1;
    background: #ebedfb;
}

/* small table */
.mini-table {
    width: 100%;
    table-layout: fixed;
    border-collapse: collapse;
}

.mini-table th {
    height: 31px;
    text-align: left;
    font-size: 10px;
    font-weight: 600;
    color: #333;
    background: #fcfcfc;
    border-bottom: 1px solid #f4f4f4;
}

.mini-table th:first-child {
    width: 178px;
    padding-left: 5px;
}

.mini-table td:first-child {
    padding-left: 6px;
}

.mini-table th:nth-child(2) { width: 67px; }
.mini-table th:nth-child(3) { width: 85px; }

.mini-table td {
    height: 53px;
    border-bottom: 1px solid #f5f5f5;
    white-space: nowrap;
    overflow: hidden;
}

.person {
    display: flex;
    align-items: center;
    gap: 9px;
}

.person b {
    display: block;
    font-size: 10.5px;
    font-weight: 500;
    color: #222;
}

.person small {
    display: block;
    margin-top: 2px;
    font-size: 9.3px;
    color: #999;
}

.person-clip {
    min-width: 0;
    width: 98px;
}

.person-clip b {
    overflow: hidden;
    text-overflow: ellipsis;
    white-space: nowrap;
}

.trx-id {
    display: inline-block;
    padding: 3px;
    font-size: 9px;
    color: #aaa;
    background: #fafafa;
}

.pill {
    height: 21px;
    padding: 0 8px;
    display: inline-flex;
    align-items: center;
    gap: 4px;
    font-size: 9px;
    font-weight: 500;
    vertical-align: middle;
}

.pill .ic {
    width: 10px;
    height: 10px;
}

.muted {
    font-size: 10px;
    color: #999;
}

/* filter bar */
.filter-bar {
    width: 881.5px;
    height: 54px;
    padding: 0 12px;
    display: flex;
    align-items: center;
    justify-content: space-between;
    background: #fff;
    border: 1px solid #f7f7f7;
    margin-bottom: 21px;
}

.tabs {
    display: flex;
    gap: 6px;
}

.tab {
    height: 28px;
    padding: 0 11.5px;
    background: #f5f5f5;
    border: none;
    font: inherit;
    font-size: 11px;
    color: #666;
}

.tab.active {
    background: #3a4de4;
    color: #fff;
}

.filter-right {
    display: flex;
    gap: 9px;
}

.select {
    height: 28px;
    padding: 0 9px;
    display: flex;
    align-items: center;
    gap: 10px;
    background: #fff;
    border: 1px solid #eee;
    font-size: 10.5px;
    color: #666;
}

.select-search {
    width: 195px;
    color: #aaa;
}

.select-date {
    width: 128px;
    justify-content: space-between;
}

.select-types {
    width: 110px;
    gap: 14px;
}

.select-types .ic {
    width: 10px;
    height: 10px;
}

/* alert cards */
.alert-card {
    width: 881.5px;
    height: 132px;
    margin-bottom: 12px;
    padding: 14px 15px;
    display: flex;
    gap: 12.5px;
    background: #fff;
    border: 1px solid #f7f7f7;
}

.alert-icon {
    width: 37px;
    height: 37px;
    flex: none;
    display: flex;
    align-items: center;
    justify-content: center;
    background: #fef2f2;
    color: #e0303c;
}

.alert-icon .ic {
    width: 18px;
    height: 18px;
}

.alert-body {
    flex: 1;
}

.alert-meta {
    display: flex;
    align-items: center;
    gap: 6px;
    font-size: 9px;
    color: #bbb;
}

.risk-tag {
    height: 16px;
    padding: 0 6px;
    display: flex;
    align-items: center;
    font-size: 8.5px;
    font-weight: 500;
    color: #dc2626;
    background: #fee2e2;
}

.alert-body h3 {
    margin: 3px 0 3px;
    font-size: 12.2px;
    line-height: 18px;
    font-weight: 600;
    color: #222;
}

.alert-body p {
    margin: 0;
    font-size: 10.35px;
    line-height: 16px;
    color: #888;
}

.alert-foot {
    margin-top: 9px;
    padding-top: 9px;
    display: flex;
    align-items: center;
    gap: 19px;
    border-top: 1px solid #f5f5f5;
}

.alert-foot .person {
    gap: 7px;
}

.fact {
    display: flex;
    align-items: center;
    gap: 5px;
    font-size: 10.3px;
    color: #888;
}

.fact b {
    font-weight: 600;
    color: #222;
}

/* big tables */
.data-table {
    width: 881.5px;
    table-layout: fixed;
    border-collapse: collapse;
    background: #fff;
}

.data-table th {
    height: 38px;
    text-align: left;
    font-size: 10.5px;
    font-weight: 600;
    color: #333;
    background: #fcfcfc;
    border-bottom: 1px solid #f4f4f4;
}

.data-table th:nth-child(1) { width: 232px; }
.data-table th:nth-child(2) { width: 143px; }
.data-table th:nth-child(3) { width: 142px; }
.data-table th:nth-child(4) { width: 71px; }
.data-table th:nth-child(5) { width: 150px; }

.data-table th.right {
    text-align: right;
    padding-right: 19px;
}

.data-table td {
    border-bottom: 1px solid #f3f3f3;
    white-space: nowrap;
}

.data-table th:first-child,
.data-table td:first-child {
    padding-left: 20px;
}

.txn-table {
    margin-top: 22px;
}

.txn-table th {
    height: 39px;
}

.txn-table td {
    height: 59px;
}

.cust-table {
    margin-top: 22px;
}

.cust-table td {
    height: 56px;
}

.cust-table th:first-child,
.cust-table td:first-child {
    padding-left: 18px;
}

.cust-table .person {
    gap: 11px;
}

.cust-table .person b {
    font-size: 12.2px;
}

.cust-table .person small {
    margin-top: 3px;
    font-size: 9.5px;
}

.txn-table .person {
    gap: 7.5px;
}

.txn-table .person-clip b {
    font-size: 10.6px;
}

.txn-table .person-clip small {
    font-size: 9px;
}

.txn-table td:first-child .person {
    gap: 9px;
}

.txn-table td:first-child b {
    font-size: 12.2px;
}

.txn-table td:first-child small {
    font-size: 8.7px;
}

.dir-icon {
    width: 30px;
    height: 30px;
    flex: none;
    display: flex;
    align-items: center;
    justify-content: center;
}

.dir-icon .ic {
    width: 14px;
    height: 14px;
}

.money {
    font-size: 14px;
    font-weight: 600;
    letter-spacing: -0.5px;
    color: #111;
}

.money small {
    display: block;
    margin-top: 3px;
    font-size: 9px;
    font-weight: 400;
    letter-spacing: 0;
    color: #bbb;
}

.money-sm {
    font-size: 12.5px;
}

.money-out {
    color: #e87d1a;
}

.risk {
    width: 30px;
    height: 21px;
    display: flex;
    align-items: center;
    justify-content: center;
    font-size: 9.5px;
    font-weight: 500;
}

.row-actions {
    padding-right: 19px;
    display: flex;
    align-items: center;
    justify-content: flex-end;
    gap: 6px;
}

.btn-mini {
    width: 72px;
    height: 24px;
    display: flex;
    align-items: center;
    justify-content: center;
    gap: 7px;
    background: #fff;
    border: 1px solid #eee;
    font: inherit;
    font-size: 10px;
    color: #666;
}

.dots {
    width: 24px;
    display: flex;
    justify-content: center;
    color: #aaa;
}
```
